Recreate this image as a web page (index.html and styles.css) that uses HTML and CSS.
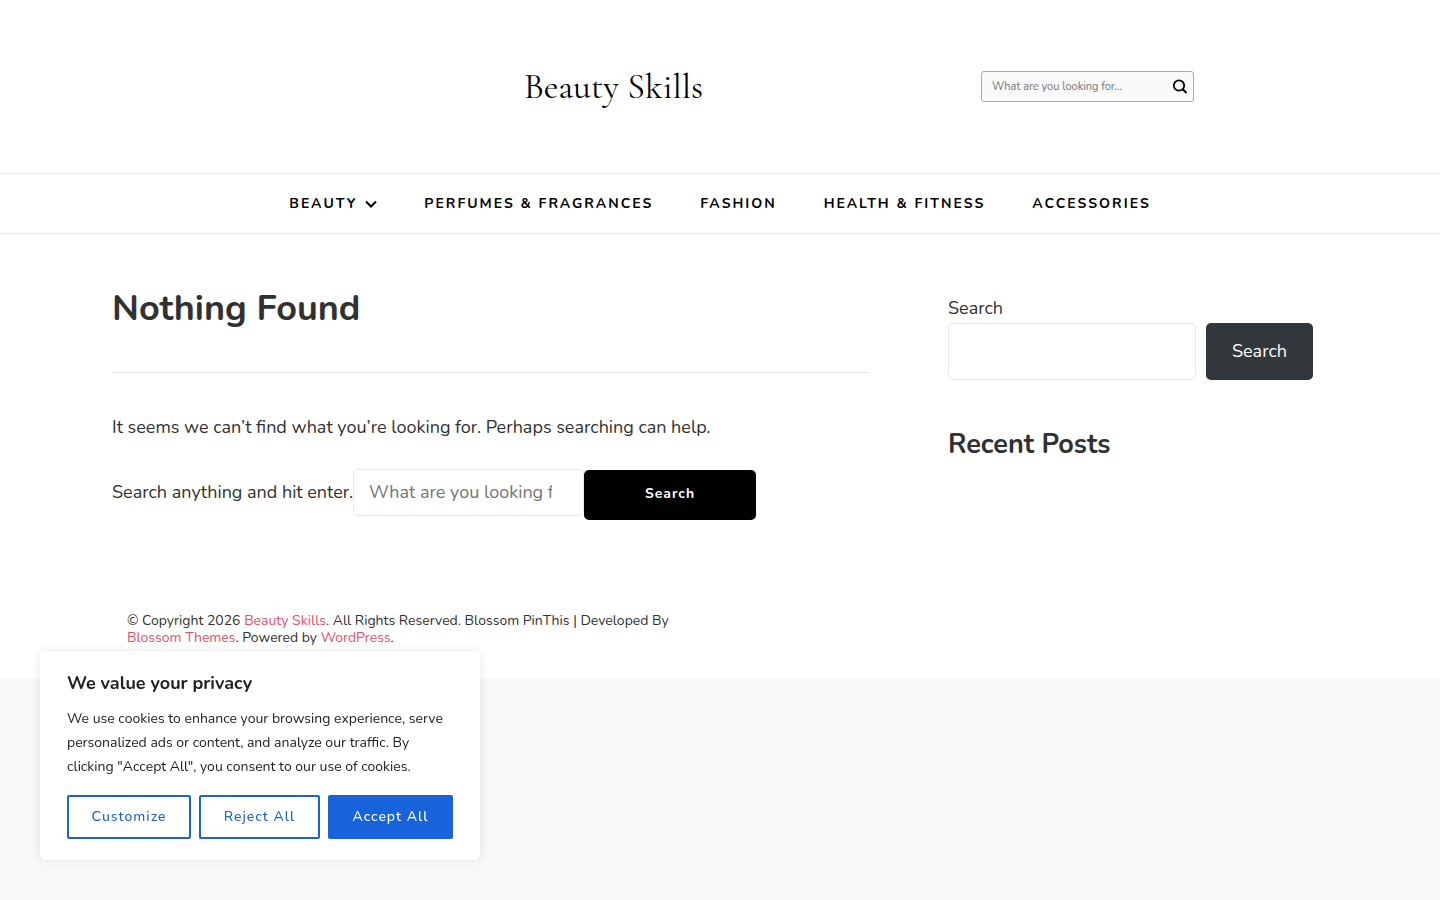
FILE: index.html
```html
<!DOCTYPE html>
<html lang="en">
<head>
<meta charset="UTF-8">
<meta name="viewport" content="width=device-width, initial-scale=1.0">
<title>Nothing Found - Beauty Skills</title>
<link rel="stylesheet" href="styles.css">
</head>
<body>

<div class="site">
    <header class="site-header">
        <div class="header-inner">
            <p class="site-title"><a href="#">Beauty Skills</a></p>
            <form class="header-search" role="search">
                <input type="search" aria-label="Search for" placeholder="What are you looking for...">
                <button type="submit" aria-label="Search">
                    <svg width="16" height="16" viewBox="0 0 16 16" fill="none" stroke="#000" stroke-width="1.8"><circle cx="7" cy="6.500" r="5.2"/><path d="M10.700 10.200l3.800 3.800" stroke-width="2"/></svg>
                </button>
            </form>
        </div>
        <nav class="main-nav">
            <ul>
                <li><a href="#">Beauty<svg width="12" height="8" viewBox="0 0 12 8" fill="none" stroke="#000" stroke-width="2"><path d="M1 1.500l5 5 5-5"/></svg></a></li>
                <li><a href="#">Perfumes &amp; Fragrances</a></li>
                <li><a href="#">Fashion</a></li>
                <li><a href="#">Health &amp; Fitness</a></li>
                <li><a href="#">Accessories</a></li>
            </ul>
        </nav>
    </header>

    <div class="container content">
        <main>
            <h1 class="page-title">Nothing Found</h1>
            <p class="message">It seems we can’t find what you’re looking for. Perhaps searching can help.</p>
            <form class="search-form" role="search">
                <label for="search-main">Search anything and hit enter.</label>
                <input type="search" id="search-main" placeholder="What are you looking for...">
                <button type="submit">Search</button>
            </form>
        </main>

        <aside>
            <form class="widget-search" role="search">
                <label for="search-widget">Search</label>
                <div class="widget-row">
                    <input type="search" id="search-widget">
                    <button type="submit">Search</button>
                </div>
            </form>
            <h2 class="widget-title">Recent Posts</h2>
        </aside>
    </div>

    <footer class="container site-footer">
        <p class="copyright">© Copyright 2026 <a href="#">Beauty Skills</a>. All Rights Reserved. Blossom PinThis | Developed By <a href="#">Blossom Themes</a>. Powered by <a href="#">WordPress</a>.</p>
    </footer>
</div>

<section class="cookie-box" aria-label="We value your privacy">
    <h2>We value your privacy</h2>
    <p>We use cookies to enhance your browsing experience, serve personalized ads or content, and analyze our traffic. By clicking "Accept All", you consent to our use of cookies.</p>
    <div class="cookie-buttons">
        <button type="button">Customize</button>
        <button type="button">Reject All</button>
        <button type="button" class="accept">Accept All</button>
    </div>
</section>

</body>
</html>
```
FILE: styles.css
```css
* {
    box-sizing: border-box;
}
body {
    margin: 0;
    background: #f8f8f8;
    color: #313131;
    font-family: Nunito, Lato, sans-serif;
    font-size: 18px;
    line-height: 32px;
}
h1, h2, p, ul {
    margin: 0;
    padding: 0;
}
a {
    color: inherit;
    text-decoration: none;
}
input, button {
    font-family: inherit;
    margin: 0;
}
input {
    min-width: 0;
    color: inherit;
    border: 1px solid #e8e8e8;
    border-radius: 5px;
    background: #fff;
    appearance: none;
}
input::placeholder {
    color: #757575;
}
input::-webkit-search-cancel-button {
    display: none;
}
button {
    border: none;
    border-radius: 5px;
    cursor: pointer;
}
.site {
    background: #fff;
}
.container {
    max-width: 1216px;
    margin: 0 auto;
}

/* Header */
.header-inner {
    display: flex;
    align-items: center;
    max-width: 948px;
    margin: 0 auto;
    padding: 64px 0;
}
.site-title {
    flex: 1;
    text-align: center;
    color: #000;
    font-family: "Cormorant Garamond", "Liberation Serif", serif;
    font-size: 36px;
    line-height: 45px;
}
.header-search {
    display: flex;
    align-items: center;
    width: 213px;
    height: 31px;
    border: 1px solid #aaa;
    border-radius: 3px;
    background: #fafafa;
}
.header-search input {
    flex: 1;
    padding: 0 10px;
    border: none;
    background: none;
    font-size: 11px;
}
.header-search button {
    display: flex;
    padding: 0 5px;
    background: none;
}
.main-nav {
    border-top: 1px solid #e8e8e8;
    border-bottom: 1px solid #e8e8e8;
}
.main-nav ul {
    display: flex;
    flex-wrap: wrap;
    justify-content: center;
    gap: 0 47px;
    padding: 17px 0;
    list-style: none;
}
.main-nav a {
    display: flex;
    align-items: center;
    gap: 8px;
    color: #000;
    font-size: 14px;
    font-weight: 700;
    line-height: 25px;
    letter-spacing: 2px;
    text-transform: uppercase;
}

/* Content */
.content {
    display: grid;
    grid-template-columns: minmax(0, 1fr) 365px;
    gap: 79px;
    padding: 50px 15px 60px 0;
}
.page-title {
    margin-bottom: 38px;
    padding-bottom: 38px;
    border-bottom: 1px solid #e8e8e8;
    font-size: 36px;
    line-height: 50px;
}
.message {
    margin-bottom: 26px;
}
.search-form {
    display: flex;
    align-items: flex-start;
}
.search-form label {
    line-height: 46px;
}
.search-form input {
    width: 231px;
    height: 47px;
    padding: 0 31px 2px 15px;
    font-size: 18px;
}
.search-form input::-webkit-search-cancel-button {
    display: none;
}
.search-form button {
    width: 172px;
    height: 50px;
    margin-top: 1px;
    padding: 0 0 3px;
    background: #000;
    color: #fff;
    font-size: 14px;
    font-weight: 700;
    letter-spacing: 1px;
}
aside {
    padding-top: 8px;
}
.widget-search label {
    display: block;
    padding-top: 1px;
    line-height: 30px;
}
.widget-row {
    display: flex;
    gap: 10px;
}
.widget-row input {
    flex: 1;
    height: 57px;
    padding: 0 15px;
    font-size: 18px;
}
.widget-row button {
    width: 107px;
    padding: 0 0 2px;
    background: #32373c;
    color: #fff;
    font-size: 18px;
}
.widget-title {
    margin-top: 45px;
    font-size: 27px;
    line-height: 40px;
}

/* Footer */
.site-footer {
    padding: 32px 15px;
}
.copyright {
    max-width: 570px;
    font-size: 14px;
    line-height: 17px;
}
.copyright a {
    color: #ea4e68;
}

/* Cookie notice */
.cookie-box {
    position: fixed;
    left: 40px;
    bottom: 40px;
    width: 440px;
    padding: 20px 27px 21px;
    border-radius: 6px;
    background: #fff;
    color: #212121;
    box-shadow: 0 0 10px rgba(0, 0, 0, 0.1);
}
.cookie-box h2 {
    margin-bottom: 12px;
    font-size: 18px;
    line-height: 24px;
}
.cookie-box p {
    margin-bottom: 16px;
    font-size: 14px;
    line-height: 24px;
}
.cookie-buttons {
    display: flex;
    gap: 8px;
}
.cookie-buttons button {
    flex: 1 1 auto;
    height: 44px;
    padding: 0 0 2px;
    border: 2px solid #1863dc;
    border-radius: 2px;
    background: #fff;
    color: #1863dc;
    font-size: 14px;
    font-weight: 500;
    letter-spacing: 1px;
}
.cookie-buttons .accept {
    background: #1863dc;
    color: #fff;
}
```
